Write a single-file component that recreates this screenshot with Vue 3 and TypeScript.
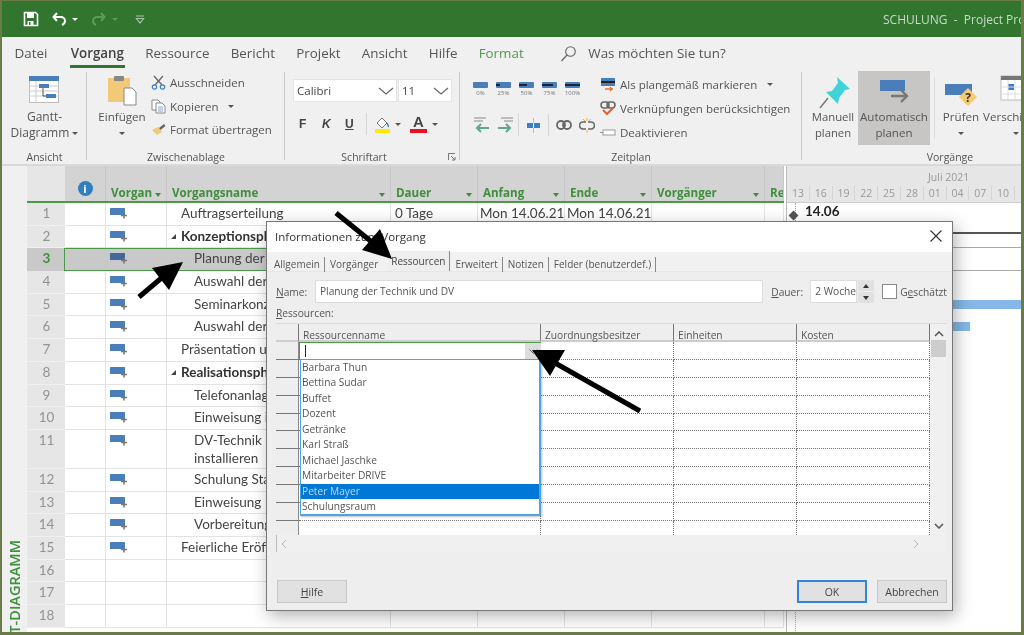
<template>
  <div class="app">
    <!-- Titelleiste -->
    <div class="titlebar">
      <div class="qat">
        <svg width="16" height="16" viewBox="0 0 16 16"><path d="M1.5 1.5h11l2 2v11h-13z" fill="none" stroke="#fff" stroke-width="1.6" /><rect x="4" y="2" width="7" height="5" fill="#fff" /><rect x="4.5" y="10" width="6" height="4" fill="#fff" /><rect x="6" y="11" width="1.5" height="3" fill="#31752f" /></svg>
        <svg class="undo" width="16" height="14" viewBox="0 0 16 14"><path d="M5 1 1.5 5 5 9" fill="none" stroke="#fff" stroke-width="2" /><path d="M2 5h7a4 4 0 0 1 4 4c0 2-1 3-3 4" fill="none" stroke="#fff" stroke-width="2" /></svg>
        <span class="caret white"></span>
        <svg class="redo" width="16" height="14" viewBox="0 0 16 14"><path d="M11 1l3.500 4L11 9" fill="none" stroke="#5d9a5b" stroke-width="2" /><path d="M14 5H7a4 4 0 0 0-4 4c0 2 1 3 3 4" fill="none" stroke="#5d9a5b" stroke-width="2" /></svg>
        <span class="caret faded"></span>
        <svg class="custom" width="10" height="9" viewBox="0 0 10 9"><path d="M1 1h8M1.500 3.500h7L5 8z" fill="none" stroke="#a6c8a5" stroke-width="1.200" /></svg>
      </div>
      <div class="doc-title">SCHULUNG &nbsp;-&nbsp; Project Professional</div>
    </div>

    <!-- Ribbon -->
    <div class="tabs">
      <span v-for="tab in ribbonTabs" :key="tab" class="tab" :class="{ current: tab === 'Vorgang', contextual: tab === 'Format' }">{{ tab }}</span>
      <svg class="lens" width="17" height="17" viewBox="0 0 17 17"><circle cx="10.500" cy="6.500" r="4.800" fill="none" stroke="#666" stroke-width="1.100" /><path d="M7 10l-5.500 6" stroke="#666" stroke-width="1.300" /></svg>
      <span class="search">Was möchten Sie tun?</span>
    </div>

    <div class="ribbon">
      <div class="group g-ansicht">
        <div class="group-body center">
          <button class="big gantt-btn">
            <svg width="32" height="29" viewBox="0 0 32 29"><rect x="1.500" y="1.500" width="29" height="26" fill="#fff" stroke="#bbb" /><rect x="1" y="1" width="30" height="5" fill="#4a7ebb" /><path d="M8 6v22M1 11h30M1 16h30M1 21h30" stroke="#ccc" /><rect x="11" y="9" width="10" height="4" fill="#4a7ebb" /><rect x="18" y="19" width="10" height="4" fill="#4a7ebb" /><path d="M15 13v8h3" fill="none" stroke="#555" /></svg>
            <span class="big-label">Gantt-<br />Diagramm <i class="caret"></i></span>
          </button>
        </div>
        <div class="group-label">Ansicht</div>
      </div>

      <div class="group g-clip">
        <div class="group-body row">
          <button class="big einfuegen">
            <svg width="30" height="31" viewBox="0 0 30 31"><rect x="1" y="3" width="22" height="24" fill="#f2c879" /><rect x="7" y="1" width="10" height="5" rx="1" fill="#888" /><path d="M17 13h8l4 4v13H17z" fill="#fff" stroke="#888" /></svg>
            <span class="big-label">Einfügen<br /><i class="caret"></i></span>
          </button>
          <div class="small-col">
            <div class="small">
              <svg width="15" height="15" viewBox="0 0 15 15"><path d="M3 1l8 9M12 1L4 10" stroke="#666" stroke-width="1.300" /><circle cx="3.500" cy="12" r="2.200" fill="none" stroke="#3a7fc1" stroke-width="1.200" /><circle cx="11.500" cy="12" r="2.200" fill="none" stroke="#3a7fc1" stroke-width="1.200" /></svg>
              Ausschneiden
            </div>
            <div class="small">
              <svg width="15" height="15" viewBox="0 0 15 15"><path d="M1 1h6l2 2v8H1z" fill="#fff" stroke="#888" /><path d="M5 4h6l3 3v7H5z" fill="#fff" stroke="#888" /><path d="M7 8h5M7 10h5M7 12h5" stroke="#7aa5cf" /></svg>
              Kopieren <i class="caret ml"></i>
            </div>
            <div class="small">
              <svg width="15" height="15" viewBox="0 0 15 15"><path d="M1 8l6-3 4 5-5 3z" fill="#f2c879" /><path d="M8 6l5-4 1.500 2-5 4z" fill="#666" /></svg>
              Format übertragen
            </div>
          </div>
        </div>
        <div class="group-label">Zwischenablage</div>
      </div>

      <div class="group g-font">
        <div class="group-body font-body">
          <div class="combos">
            <div class="combo c-name"><span>Calibri</span><svg width="16" height="8" viewBox="0 0 16 8"><path d="M1 1l7 6 7-6" fill="none" stroke="#666" stroke-width="1.200" /></svg></div>
            <div class="combo c-size"><span>11</span><svg width="16" height="8" viewBox="0 0 16 8"><path d="M1 1l7 6 7-6" fill="none" stroke="#666" stroke-width="1.200" /></svg></div>
          </div>
          <div class="font-tools">
            <b class="ft">F</b>
            <b class="ft italic">K</b>
            <b class="ft under">U</b>
            <span class="vsep"></span>
            <span class="color-btn">
              <svg width="17" height="17" viewBox="0 0 17 17"><path d="M3 7l5-5 5 5-5 5z" fill="#fff" stroke="#777" /><path d="M13 7c1 2 2 3 1 4" fill="none" stroke="#3a7fc1" stroke-width="1.500" /><rect x="1" y="13" width="15" height="4" fill="#ffeb00" /></svg>
            </span>
            <i class="caret"></i>
            <span class="color-btn fontcolor">A<em></em></span>
            <i class="caret"></i>
          </div>
        </div>
        <div class="group-label shift">Schriftart</div>
        <svg class="launcher" width="8" height="8" viewBox="0 0 8 8"><path d="M.5 7V.5H7M3 3l4 4M7 4v3H4" fill="none" stroke="#777" /></svg>
      </div>

      <div class="group g-plan">
        <div class="group-body row">
          <div class="plan-grid">
            <div class="pct-row">
              <span v-for="p in percents" :key="p.label" class="pct">
                <span class="pct-bar"><i :style="{ width: p.fill + '%' }"></i></span>
                <small>{{ p.label }}</small>
              </span>
            </div>
            <div class="move-row">
              <svg width="17" height="17" viewBox="0 0 17 17"><path d="M1 1h12M1 4h9" stroke="#aaa" stroke-width="1.500" /><path d="M16 11H4M8 7l-4 4 4 4" fill="none" stroke="#5fa88c" stroke-width="2" /></svg>
              <svg width="17" height="17" viewBox="0 0 17 17"><path d="M4 1h12M7 4h9" stroke="#aaa" stroke-width="1.500" /><path d="M1 11h12M9 7l4 4-4 4" fill="none" stroke="#5fa88c" stroke-width="2" /></svg>
              <span class="vsep first"></span>
              <svg width="15" height="15" viewBox="0 0 15 15"><rect x="1" y="5" width="13" height="5" fill="#3a7fc1" /><path d="M7.500 0v15" stroke="#bbb" /><path d="M7.500 5v5" stroke="#fff" /></svg>
              <span class="vsep"></span>
              <svg width="16" height="10" viewBox="0 0 16 10"><rect x="1" y="1" width="8" height="8" rx="4" fill="none" stroke="#666" stroke-width="1.800" /><rect x="7" y="1" width="8" height="8" rx="4" fill="none" stroke="#666" stroke-width="1.800" /></svg>
              <svg width="16" height="15" viewBox="0 0 16 15"><path d="M7 4H4a3.500 3.500 0 0 0 0 7h3M9 4h3a3.500 3.500 0 0 1 0 7H9" fill="none" stroke="#666" stroke-width="1.600" /><path d="M8 0v3M8 12v3M4 1l2 2M12 1l-2 2" stroke="#f0b040" /></svg>
            </div>
          </div>
          <div class="small-col plan-col">
            <div class="small">
              <svg width="16" height="15" viewBox="0 0 16 15"><rect x="1" y="1" width="14" height="8" fill="#4a7ebb" /><path d="M1 5h14" stroke="#222" stroke-width="2" /><path d="M5 12h8M10 10l2 2-2 2" fill="none" stroke="#e8752a" stroke-width="1.300" /></svg>
              Als plangemäß markieren <i class="caret ml2"></i>
            </div>
            <div class="small">
              <svg width="16" height="15" viewBox="0 0 16 15"><rect x="1" y="1" width="8" height="6" rx="3" fill="none" stroke="#666" stroke-width="1.500" /><rect x="7" y="1" width="8" height="6" rx="3" fill="none" stroke="#666" stroke-width="1.500" /><path d="M3 9l4 4 7-7" fill="none" stroke="#e0622a" stroke-width="2" /></svg>
              Verknüpfungen berücksichtigen
            </div>
            <div class="small">
              <svg width="16" height="15" viewBox="0 0 16 15"><rect x="3" y="5" width="12" height="5" fill="#fff" stroke="#999" /><path d="M0 7.500h3" stroke="#999" /></svg>
              Deaktivieren
            </div>
          </div>
        </div>
        <div class="group-label">Zeitplan</div>
      </div>

      <div class="group g-tasks">
        <div class="group-body row">
          <button class="big manuell">
            <svg width="34" height="36" viewBox="0 0 34 36"><path d="M19 1l13 12-5 1-6 8-1 6-12-12 6-1 6-8z" fill="#3fd2d8" /><path d="M10 22L2 32" stroke="#777" stroke-width="1.500" /></svg>
            <span class="big-label">Manuell<br />planen</span>
          </button>
          <button class="big auto">
            <svg width="34" height="36" viewBox="0 0 34 36"><rect x="3" y="2" width="25" height="11" fill="#4a7ebb" /><path d="M14 18h16M24 12l6 6-6 6" fill="none" stroke="#777" stroke-width="2.400" /></svg>
            <span class="big-label">Automatisch<br />planen</span>
          </button>
          <span class="tall-sep"></span>
          <button class="big pruefen">
            <svg width="34" height="36" viewBox="0 0 34 36"><rect x="1" y="9" width="27" height="11" fill="#4a7ebb" /><path d="M24 13l9 9-9 9-9-9z" fill="#f6c972" /><text x="24" y="27" text-anchor="middle" font-size="12" font-weight="700" font-family="Open Sans" fill="#333">?</text></svg>
            <span class="big-label">Prüfen<br /><i class="caret"></i></span>
          </button>
          <button class="big verschieben">
            <svg width="36" height="36" viewBox="0 0 36 36"><rect x="1" y="1" width="32" height="24" fill="#fff" stroke="#bbb" /><rect x="1" y="1" width="32" height="4" fill="#777" /><rect x="8" y="9" width="6" height="6" fill="#3a7fc1" /><path d="M8 5v20M15 5v20M22 5v20M1 12h32M1 19h32" stroke="#ddd" /><rect x="22" y="22" width="10" height="3" fill="#e8752a" /></svg>
            <span class="big-label">Verschieben<br /><i class="caret"></i></span>
          </button>
        </div>
        <div class="group-label vorg">Vorgänge</div>
      </div>
    </div>

    <!-- Gantt-Tabelle -->
    <div class="sheet">
      <div class="side"><span>GANTT-DIAGRAMM</span></div>
      <div class="table">
        <div class="thead">
          <div class="th num"></div>
          <div class="th info"><span class="info-dot">i</span></div>
          <div class="th">Vorgan<i class="tri"></i></div>
          <div class="th">Vorgangsname<i class="tri"></i></div>
          <div class="th">Dauer<i class="tri"></i></div>
          <div class="th">Anfang<i class="tri"></i></div>
          <div class="th">Ende<i class="tri"></i></div>
          <div class="th">Vorgänger<i class="tri"></i></div>
          <div class="th">Re</div>
        </div>
        <div
          v-for="(row, i) in rows"
          :key="i"
          class="tr"
          :class="{ selected: i === 2, tall: i === 10 }"
        >
          <div class="td num">{{ i + 1 }}</div>
          <div class="td"></div>
          <div class="td mode">
            <svg v-if="row.name" width="18" height="11" viewBox="0 0 18 11"><rect x="0" y="0" width="15" height="7" rx=".5" :fill="i === 2 ? '#41699c' : '#4a7ebb'" /><path d="M11 7.500h6M14 5v5.500" stroke="#777" stroke-width="1.600" /></svg>
          </div>
          <div class="td name" :class="{ bold: row.summary }" :style="{ paddingLeft: row.indent + 'px' }">
            <i v-if="row.summary" class="collapse"></i>{{ row.name }}
          </div>
          <div class="td dauer">{{ i === 0 ? '0 Tage' : '' }}</div>
          <div class="td">{{ i === 0 ? 'Mon 14.06.21' : '' }}</div>
          <div class="td">{{ i === 0 ? 'Mon 14.06.21' : '' }}</div>
          <div class="td"></div>
          <div class="td"></div>
        </div>
      </div>
      <div class="gantt">
        <div class="g-head">
          <div class="g-month">Juli 2021</div>
          <div class="g-days">
            <span v-for="d in days" :key="d">{{ d }}</span>
          </div>
        </div>
        <div class="g-canvas">
          <span class="today"></span>
          <span class="milestone"></span>
          <b class="ms-label">14.06</b>
          <span class="g-line dark" style="top: 29px"></span>
          <span class="g-line" style="top: 44px"></span>
          <span class="g-line" style="top: 67px"></span>
          <span class="g-bar" style="top: 97px; width: 235px"></span>
          <span class="g-bar" style="top: 119px; width: 183px"></span>
        </div>
      </div>
    </div>

    <!-- Dialog -->
    <div class="dialog">
      <div class="dlg-title">
        <span>Informationen zum Vorgang</span>
        <svg width="12" height="12" viewBox="0 0 12 12"><path d="M.5.5l11 11M11.500.5l-11 11" stroke="#333" stroke-width="1.100" /></svg>
      </div>
      <div class="dlg-tabs">
        <span v-for="t in dialogTabs" :key="t" class="dlg-tab" :class="{ on: t === 'Ressourcen', plain: t === 'Vorgänger' }">{{ t }}</span>
      </div>
      <div class="dlg-body">
        <div class="name-row">
          <label class="lbl-name"><u>N</u>ame:</label>
          <div class="field f-name">Planung der Technik und DV</div>
          <label class="lbl-dauer"><u>D</u>auer:</label>
          <div class="field f-dauer">2 Wochen</div>
          <div class="spin">
            <span><i class="up"></i></span>
            <span><i class="down"></i></span>
          </div>
          <span class="check"></span>
          <label class="lbl-est">G<u>e</u>schätzt</label>
        </div>
        <div class="res-label"><u>R</u>essourcen:</div>
        <div class="res-grid">
          <div class="res-table">
            <div class="rh corner"></div>
            <div class="rh">Ressourcenname</div>
            <div class="rh">Zuordnungsbesitzer</div>
            <div class="rh">Einheiten</div>
            <div class="rh">Kosten</div>
            <template v-for="n in 11" :key="n">
              <div class="rc head"></div>
              <div class="rc first" :class="{ active: n === 1 }">
                <template v-if="n === 1">
                  <i class="cursor"></i>
                  <span class="drop-btn"><svg width="9" height="5" viewBox="0 0 9 5"><path d="M.5.5l4 4 4-4" fill="none" stroke="#666" /></svg></span>
                </template>
              </div>
              <div class="rc"></div>
              <div class="rc"></div>
              <div class="rc"></div>
            </template>
          </div>
          <div class="vscroll">
            <svg width="10" height="6" viewBox="0 0 10 6"><path d="M1 5l4-4 4 4" fill="none" stroke="#555" stroke-width="1.500" /></svg>
            <span class="thumb"></span>
            <svg class="sc-down" width="10" height="6" viewBox="0 0 10 6"><path d="M1 1l4 4 4-4" fill="none" stroke="#555" stroke-width="1.500" /></svg>
          </div>
          <ul class="dropdown">
            <li v-for="p in resources" :key="p" :class="{ hot: p === 'Peter Mayer' }">{{ p }}</li>
          </ul>
        </div>
        <div class="hscroll">
          <svg width="6" height="10" viewBox="0 0 6 10"><path d="M5 1L1 5l4 4" fill="none" stroke="#bbb" /></svg>
          <svg width="6" height="10" viewBox="0 0 6 10"><path d="M1 1l4 4-4 4" fill="none" stroke="#bbb" /></svg>
        </div>
        <div class="buttons">
          <button class="btn"><u>H</u>ilfe</button>
          <span class="spacer"></span>
          <button class="btn primary">OK</button>
          <button class="btn">Abbrechen</button>
        </div>
      </div>
    </div>

    <!-- Pfeile -->
    <svg class="arrows" width="1024" height="635" viewBox="0 0 1024 635">
      <path d="M336 213L378 247" stroke="#000" stroke-width="5" />
      <polygon points="392,259 362,250 380,229" fill="#000" />
      <path d="M139 297L165 275" stroke="#000" stroke-width="5" />
      <polygon points="183,262 152,268 169,290" fill="#000" />
      <path d="M640 411L548 359" stroke="#000" stroke-width="5" />
      <polygon points="532,350 565,350 550,376" fill="#000" />
    </svg>
  </div>
</template>

<script setup lang="ts">
interface TaskRow {
  name: string
  indent: number
  summary?: boolean
}

const ribbonTabs = ['Datei', 'Vorgang', 'Ressource', 'Bericht', 'Projekt', 'Ansicht', 'Hilfe', 'Format']

const percents = [
  { label: '0%', fill: 0 },
  { label: '25%', fill: 25 },
  { label: '50%', fill: 50 },
  { label: '75%', fill: 75 },
  { label: '100%', fill: 100 }
]

const rows: TaskRow[] = [
  { name: 'Auftragserteilung', indent: 14 },
  { name: 'Konzeptionsphase', indent: 4, summary: true },
  { name: 'Planung der Technik und DV', indent: 27 },
  { name: 'Auswahl der Referenten', indent: 27 },
  { name: 'Seminarkonzept', indent: 27 },
  { name: 'Auswahl der Räume', indent: 27 },
  { name: 'Präsentation und Abnahme', indent: 14 },
  { name: 'Realisationsphase', indent: 4, summary: true },
  { name: 'Telefonanlage', indent: 27 },
  { name: 'Einweisung in Technik', indent: 27 },
  { name: 'DV-Technik und Netzwerk installieren', indent: 27 },
  { name: 'Schulung Starttermin', indent: 27 },
  { name: 'Einweisung Personal', indent: 27 },
  { name: 'Vorbereitung Feier', indent: 27 },
  { name: 'Feierliche Eröffnung', indent: 14 },
  { name: '', indent: 0 },
  { name: '', indent: 0 },
  { name: '', indent: 0 }
]

const days = ['13', '16', '19', '22', '25', '28', '01', '04', '07', '10', '13']

const dialogTabs = ['Allgemein', 'Vorgänger', 'Ressourcen', 'Erweitert', 'Notizen', 'Felder (benutzerdef.)']

const resources = [
  'Barbara Thun',
  'Bettina Sudar',
  'Buffet',
  'Dozent',
  'Getränke',
  'Karl Straß',
  'Michael Jaschke',
  'Mitarbeiter DRIVE',
  'Peter Mayer',
  'Schulungsraum'
]
</script>

<style>
html,
body {
  margin: 0;
  background: #fff;
}
</style>

<style scoped>
.app {
  position: relative;
  width: 1024px;
  height: 635px;
  box-sizing: border-box;
  overflow: hidden;
  border: 2px solid #6b7b47;
  border-top-width: 1px;
  border-bottom-width: 3px;
  border-right-width: 3px;
  font-family: "Open Sans", "Liberation Sans", sans-serif;
  color: #444;
  background: #fff;
  filter: blur(0.45px);
}

button {
  font: inherit;
  color: inherit;
  background: none;
  border: 0;
  padding: 0;
}

.titlebar {
  display: flex;
  align-items: center;
  justify-content: space-between;
  height: 36px;
  background: #31752f;
}

.qat {
  display: flex;
  align-items: center;
  padding-left: 21px;
}

.undo {
  margin-left: 13px;
}

.redo {
  margin-left: 12px;
}

.custom {
  margin-left: 17px;
}

.caret {
  display: inline-block;
  width: 0;
  height: 0;
  border-left: 3px solid transparent;
  border-right: 3px solid transparent;
  border-top: 3px solid #555;
  vertical-align: middle;
}

.caret.white {
  margin-left: 4px;
  border-top-color: #fff;
}

.caret.faded {
  margin-left: 6px;
  border-top-color: #5d9a5b;
}

.caret.ml {
  margin-left: 5px;
}

.caret.ml2 {
  margin-left: 6px;
}

.doc-title {
  width: 138px;
  overflow: hidden;
  white-space: nowrap;
  font-size: 12px;
  color: #c9dcc8;
}

.tabs {
  display: flex;
  align-items: center;
  box-sizing: border-box;
  height: 34px;
  padding: 0 0 2px 2px;
  background: #f1f0f0;
  font-size: 13.400px;
  color: #555;
}

.tab {
  position: relative;
  padding: 0 10.600px;
  white-space: nowrap;
}

.tab:first-child {
  margin-right: 2px;
}

.tab.current {
  font-weight: 600;
  color: #444;
}

.tab.current::after {
  content: "";
  position: absolute;
  left: 10px;
  right: 10px;
  bottom: -6px;
  height: 3px;
  background: #31752f;
}

.tab.contextual {
  color: #4f9a4c;
}

.lens {
  margin-left: 26px;
}

.search {
  margin-left: 11px;
}

.ribbon {
  display: flex;
  height: 93px;
  overflow: hidden;
  background: #f1f0f0;
  border-bottom: 2px solid #d9d9d9;
}

.group {
  position: relative;
  flex: none;
  display: flex;
  flex-direction: column;
  box-sizing: border-box;
  height: 92px;
  margin-top: 1px;
}

.group::after {
  content: "";
  position: absolute;
  right: 0;
  top: 0;
  width: 1px;
  height: 88px;
  background: #c9c9c9;
}

.g-tasks::after {
  display: none;
}

.group-body {
  flex: 1;
  min-height: 0;
}

.group-body.row {
  display: flex;
}

.group-body.center {
  display: flex;
  justify-content: center;
}

.group-label {
  height: 14px;
  font-size: 10.500px;
  line-height: 14px;
  text-align: center;
  color: #555;
}

.group-label.shift {
  padding-right: 17px;
}

.group-label.vorg {
  width: 296px;
}

.g-ansicht {
  width: 85px;
}

.g-clip {
  width: 198px;
}

.g-font {
  width: 175px;
}

.g-plan {
  width: 342px;
}

.g-tasks {
  width: 300px;
}

.big {
  display: flex;
  flex-direction: column;
  align-items: center;
  flex: none;
  padding-top: 3px;
  font-size: 11.600px;
  line-height: 16px;
  text-align: center;
  color: #555;
}

.big svg {
  flex: none;
}

.big-label {
  margin-top: 3px;
  white-space: nowrap;
}

.gantt-btn {
  font-size: 12px;
}

.gantt-btn .big-label {
  margin-top: 5px;
}

.einfuegen {
  width: 54px;
  margin-left: 8px;
}

.small-col {
  display: flex;
  flex-direction: column;
  gap: 4.500px;
  padding: 1px 0 0 2px;
}

.small {
  display: flex;
  align-items: center;
  gap: 4px;
  height: 19px;
  font-size: 11.500px;
  white-space: nowrap;
  color: #555;
}

.font-body {
  padding: 7px 0 0 8px;
}

.combos {
  display: flex;
  gap: 1px;
}

.combo {
  display: flex;
  align-items: center;
  justify-content: space-between;
  box-sizing: border-box;
  height: 23px;
  padding: 0 2px 0 3px;
  background: #fff;
  border: 1px solid #e4e4e4;
  font-size: 11.500px;
}

.c-name {
  width: 104px;
}

.c-size {
  width: 54px;
}

.font-tools {
  display: flex;
  align-items: center;
  height: 24px;
  margin-top: 10px;
  padding-left: 6px;
}

.ft {
  width: 23px;
  font-family: "Liberation Sans", sans-serif;
  font-size: 12px;
}

.ft.italic {
  font-style: italic;
}

.ft.under {
  width: 14px;
  text-decoration: underline;
}

.vsep {
  width: 1px;
  height: 22px;
  margin: 0 7px;
  background: #d5d5d5;
}

.color-btn {
  position: relative;
  display: inline-block;
  margin-right: 4px;
  line-height: 0;
}

.fontcolor {
  width: 17px;
  height: 18px;
  margin: 0 5px 0 9px;
  font-family: "Liberation Sans", sans-serif;
  font-size: 15px;
  font-weight: 700;
  line-height: 14px;
  text-align: center;
}

.fontcolor em {
  display: block;
  height: 4px;
  background: #e81123;
}

.launcher {
  position: absolute;
  right: 4px;
  bottom: 3px;
}

.plan-grid {
  width: 137px;
  padding: 10px 0 0 13px;
  box-sizing: border-box;
}

.pct-row {
  display: flex;
  gap: 8px;
}

.pct {
  display: flex;
  flex-direction: column;
  align-items: center;
  width: 15px;
}

.pct-bar {
  position: relative;
  display: block;
  width: 15px;
  height: 6px;
  border-radius: 1px;
  background: #4a7ebb;
}

.pct-bar i {
  position: absolute;
  left: 0;
  top: 2px;
  height: 2px;
  background: #16233a;
}

.pct small {
  margin-top: 1px;
  font-size: 6px;
  line-height: 8px;
  color: #777;
}

.move-row {
  display: flex;
  align-items: center;
  gap: 7px;
  margin-top: 17px;
}

.move-row .vsep {
  margin: 0;
}

.move-row .vsep.first {
  margin-left: -3px;
}

.plan-col {
  padding: 3px 0 0 3px;
  gap: 5px;
}

.plan-col .small {
  font-size: 11.500px;
}

.manuell {
  width: 52px;
  margin-left: 4px;
  padding-top: 4px;
}

.manuell svg {
  margin-left: 6px;
}

.manuell .big-label {
  margin-top: -3px;
  padding-left: 2px;
  font-size: 11.300px;
}

.auto {
  width: 72px;
  height: 75px;
  margin-top: -2px;
  padding-top: 8px;
  background: #c8c6c4;
}

.auto .big-label {
  margin-top: -5px;
}

.tall-sep {
  width: 1px;
  height: 60px;
  margin: 6px 8px 0 4px;
  background: #dcdcdc;
}

.pruefen {
  width: 36px;
}

.pruefen .big-label,
.verschieben .big-label {
  margin-top: -2px;
}

.verschieben {
  width: 70px;
  margin-left: 4px;
  align-items: flex-start;
}

.verschieben svg {
  margin-left: 17px;
}

.sheet {
  display: flex;
  height: 467px;
}

.side {
  position: relative;
  flex: none;
  width: 25px;
  overflow: hidden;
  display: flex;
  flex-direction: column;
  justify-content: flex-end;
  align-items: center;
  background: #f0f0f0;
}

.side span {
  margin-bottom: -40px;
  writing-mode: vertical-rl;
  transform: rotate(180deg);
  white-space: nowrap;
  font-size: 14.500px;
  font-weight: 600;
  color: #3f8f3c;
}

.table {
  flex: none;
  width: 757px;
  background: #fff;
  font-family: Lato, "Liberation Sans", sans-serif;
  font-size: 13.500px;
  color: #444;
}

.thead,
.tr {
  display: grid;
  grid-template-columns: 38px 41px 61px 224px 87px 87px 87px 113px 19px;
}

.thead {
  height: 37px;
  background: #d3d3d3;
  border-bottom: 2px solid #4b9a48;
  box-sizing: border-box;
}

.th {
  position: relative;
  display: flex;
  align-items: flex-end;
  padding: 0 0 2px 5px;
  border-right: 1px solid #c6c6c6;
  font-family: "Open Sans", sans-serif;
  font-size: 11.600px;
  font-weight: 700;
  line-height: 12px;
  color: #3f8f3c;
  white-space: nowrap;
  overflow: hidden;
  box-sizing: border-box;
}

.th.num {
  background: #e6e6e6;
  border-right: 0;
}

.th.info {
  align-items: flex-start;
  justify-content: center;
  padding: 15px 0 0;
}

.info-dot {
  width: 15px;
  height: 15px;
  border-radius: 50%;
  background: #2f7fc1;
  color: #fff;
  font-size: 11px;
  line-height: 15px;
  text-align: center;
}

.tri {
  position: absolute;
  right: 5px;
  bottom: 4px;
  width: 0;
  height: 0;
  border-left: 3.500px solid transparent;
  border-right: 3.500px solid transparent;
  border-top: 4px solid #3f8f3c;
}

.tr {
  height: 22.700px;
}

.tr.tall {
  height: 39px;
}

.td {
  min-width: 0;
  box-sizing: border-box;
  padding: 1px 2px 0;
  border-right: 1px solid #e3e3e3;
  border-bottom: 1px solid #e3e3e3;
  line-height: 18px;
  white-space: nowrap;
  overflow: hidden;
}

.td.dauer {
  padding-left: 4px;
}

.td.num {
  background: #e6e6e6;
  border-bottom-color: #f0f0f0;
  border-right: 0;
  padding-left: 3px;
  text-align: center;
  font-size: 13.500px;
  color: #929292;
}

.td.mode {
  padding: 5px 0 0 4px;
}

.td.mode svg {
  display: block;
}

.td.name {
  white-space: normal;
}

.tr:not(.tall) .td.name {
  white-space: nowrap;
}

.td.bold {
  font-weight: 700;
  color: #333;
}

.collapse {
  display: inline-block;
  width: 0;
  height: 0;
  margin-right: 5px;
  vertical-align: 2px;
  border-bottom: 5px solid #444;
  border-left: 5px solid transparent;
}

.tr.selected {
  position: relative;
}

.tr.selected .td {
  background: #c9c9c9;
  border-color: #c9c9c9;
}

.tr.selected .td.num {
  font-weight: 700;
  color: #3f8f3c;
}

.tr.selected::after {
  content: "";
  position: absolute;
  left: 37px;
  top: 0;
  right: 0;
  bottom: 0;
  border: 1.500px solid #4b9a48;
  pointer-events: none;
}

.gantt {
  flex: 1;
  min-width: 0;
  margin-left: 2px;
  border-left: 1px solid #bbb;
  overflow: hidden;
}

.g-head {
  height: 37px;
  box-sizing: border-box;
  background: #e6e6e6;
  border-bottom: 1px solid #ccc;
  font-size: 10.500px;
  color: #999;
}

.g-month {
  height: 20px;
  padding-left: 141px;
  line-height: 22px;
}

.g-days {
  display: flex;
}

.g-days span {
  flex: none;
  width: 22.800px;
  box-sizing: border-box;
  text-align: center;
  line-height: 14px;
  border-right: 1px solid #d5d5d5;
}

.g-canvas {
  position: relative;
  height: 430px;
  background: #fff;
}

.today {
  position: absolute;
  left: 8px;
  top: 0;
  bottom: 0;
  border-left: 1px dotted #aaa;
}

.milestone {
  position: absolute;
  left: 3px;
  top: 9px;
  width: 7px;
  height: 7px;
  background: #555;
  transform: rotate(45deg);
}

.ms-label {
  position: absolute;
  left: 18px;
  top: 0;
  font-family: Lato, sans-serif;
  font-size: 13.500px;
  color: #222;
}

.g-line {
  position: absolute;
  left: 4px;
  right: 0;
  height: 1px;
  background: #aaa;
}

.g-line.dark {
  height: 2px;
  background: #555;
}

.g-bar {
  position: absolute;
  left: 0;
  height: 8.500px;
  background: #85b8e8;
}

.dialog {
  position: absolute;
  left: 264px;
  top: 220px;
  width: 687px;
  height: 390px;
  box-sizing: border-box;
  display: flex;
  flex-direction: column;
  background: #eee;
  border: 1px solid #777;
  box-shadow: 3px 5px 16px rgba(0, 0, 0, 0.3);
  font-size: 10.200px;
  color: #555;
}

.dlg-title {
  display: flex;
  align-items: center;
  justify-content: space-between;
  flex: none;
  box-sizing: border-box;
  height: 30px;
  padding: 0 10px 2px 8px;
  background: #fff;
  font-size: 11.500px;
  color: #333;
}

.dlg-tabs {
  display: flex;
  flex: none;
  align-items: center;
  box-sizing: border-box;
  height: 20px;
  padding: 5px 0 0 4px;
  background: #f1f1f1;
  border-bottom: 1px solid #e6e6e6;
  font-size: 10px;
}

.dlg-tab {
  position: relative;
  padding: 0 4px 0 3px;
  margin-right: 2px;
  border-right: 1px solid #888;
  line-height: 15px;
  white-space: nowrap;
}

.dlg-tab.plain {
  margin-right: 5px;
  border-right-color: transparent;
}

.dlg-tab.on {
  align-self: flex-end;
  height: 20px;
  margin-top: -5px;
  background: #eee;
  line-height: 21px;
  color: #444;
}

.dlg-body {
  flex: 1;
  min-height: 0;
  display: flex;
  flex-direction: column;
  padding: 8px 5px 7px 9px;
}

.name-row {
  display: flex;
  flex: none;
  align-items: center;
  height: 23px;
}

.lbl-name {
  width: 39px;
}

.field {
  box-sizing: border-box;
  height: 23px;
  padding: 0 4px;
  background: #fff;
  border: 1px solid #dcdcdc;
  line-height: 20px;
  white-space: nowrap;
  overflow: hidden;
}

.f-name {
  width: 449px;
}

.lbl-dauer {
  margin-left: 8px;
  width: 39px;
}

.f-dauer {
  width: 47px;
}

.spin {
  display: flex;
  flex-direction: column;
  gap: 1px;
  width: 16px;
  height: 23px;
  margin-left: 1px;
}

.spin span {
  flex: 1;
  display: flex;
  align-items: center;
  justify-content: center;
  background: #e1e1e1;
}

.up,
.down {
  width: 0;
  height: 0;
  border-left: 3.500px solid transparent;
  border-right: 3.500px solid transparent;
}

.up {
  border-bottom: 4px solid #333;
}

.down {
  border-top: 4px solid #333;
}

.check {
  flex: none;
  width: 13px;
  height: 13px;
  margin: 0 3px 0 8px;
  background: #fff;
  border: 1px solid #888;
}

.lbl-est {
  white-space: nowrap;
}

.res-label {
  flex: none;
  height: 14px;
  margin-top: 3px;
  line-height: 14px;
}

.res-grid {
  position: relative;
  display: flex;
  flex: none;
  width: 671px;
  height: 212px;
  margin-top: 3px;
  overflow: hidden;
  border-top: 1px solid #ddd;
  box-sizing: border-box;
}

.res-table {
  display: grid;
  flex: none;
  width: 654px;
  grid-template-columns: 23px 242px 133px 123px 133px;
  grid-template-rows: 18px repeat(11, 17.900px);
}

.rh {
  box-sizing: border-box;
  padding: 4px 0 0 4px;
  border-right: 1px solid #777;
  border-bottom: 2px solid #ccc;
  line-height: 14px;
  white-space: nowrap;
}

.rh.corner {
  border-bottom-color: #ccc;
}

.rc {
  position: relative;
  box-sizing: border-box;
  background: #fff;
  border-right: 1px dotted #777;
  border-bottom: 1px dotted #777;
}

.rc.head {
  background: #eee;
  border-right: 1px solid #888;
  border-bottom: 1px solid #777;
}

.rc.active {
  border: 0;
  border-top: 1px solid #4b9a48;
  border-left: 1px solid #4b9a48;
}

.cursor {
  position: absolute;
  left: 5px;
  top: 2px;
  width: 1px;
  height: 12px;
  background: #222;
}

.drop-btn {
  position: absolute;
  right: 0;
  top: 0;
  bottom: 0;
  width: 16px;
  display: flex;
  align-items: center;
  justify-content: center;
  background: #ddd;
}

.vscroll {
  position: relative;
  flex: none;
  display: flex;
  flex-direction: column;
  align-items: center;
  width: 17px;
  padding-top: 7px;
  box-sizing: border-box;
  background: #f0f0f0;
}

.thumb {
  width: 15px;
  height: 17px;
  margin-top: 3px;
  background: #cdcdcd;
}

.sc-down {
  margin-top: auto;
  margin-bottom: 6px;
}

.dropdown {
  position: absolute;
  left: 24px;
  top: 35px;
  width: 241px;
  height: 157px;
  box-sizing: border-box;
  margin: 0;
  padding: 0;
  list-style: none;
  background: #fff;
  border: 1.500px solid #4fa3e3;
  border-right-width: 2px;
  border-bottom-width: 2px;
  box-shadow: 1px 1px 2px rgba(0, 0, 0, 0.25);
}

.dropdown li {
  height: 15.450px;
  padding-left: 1px;
  line-height: 14px;
  white-space: nowrap;
}

.dropdown li.hot {
  background: #0078d7;
  color: #b9d9f6;
}

.hscroll {
  display: flex;
  flex: none;
  align-items: center;
  justify-content: space-between;
  box-sizing: border-box;
  width: 669px;
  height: 17px;
  padding: 0 26px 0 4px;
  background: #f0f0f0;
  border-left: 1px solid #bbb;
}

.buttons {
  display: flex;
  flex: none;
  gap: 10px;
  margin-top: 28px;
  padding-left: 1px;
}

.spacer {
  flex: none;
  width: 430px;
}

.btn {
  flex: none;
  box-sizing: border-box;
  width: 70px;
  height: 23px;
  background: #e1e1e1;
  border: 1px solid #c8c8c8;
  font-size: 10.500px;
  color: #444;
}

.btn.primary {
  border: 2px solid #2f86d6;
}

.arrows {
  position: absolute;
  left: -2px;
  top: -1px;
  pointer-events: none;
}
</style>
